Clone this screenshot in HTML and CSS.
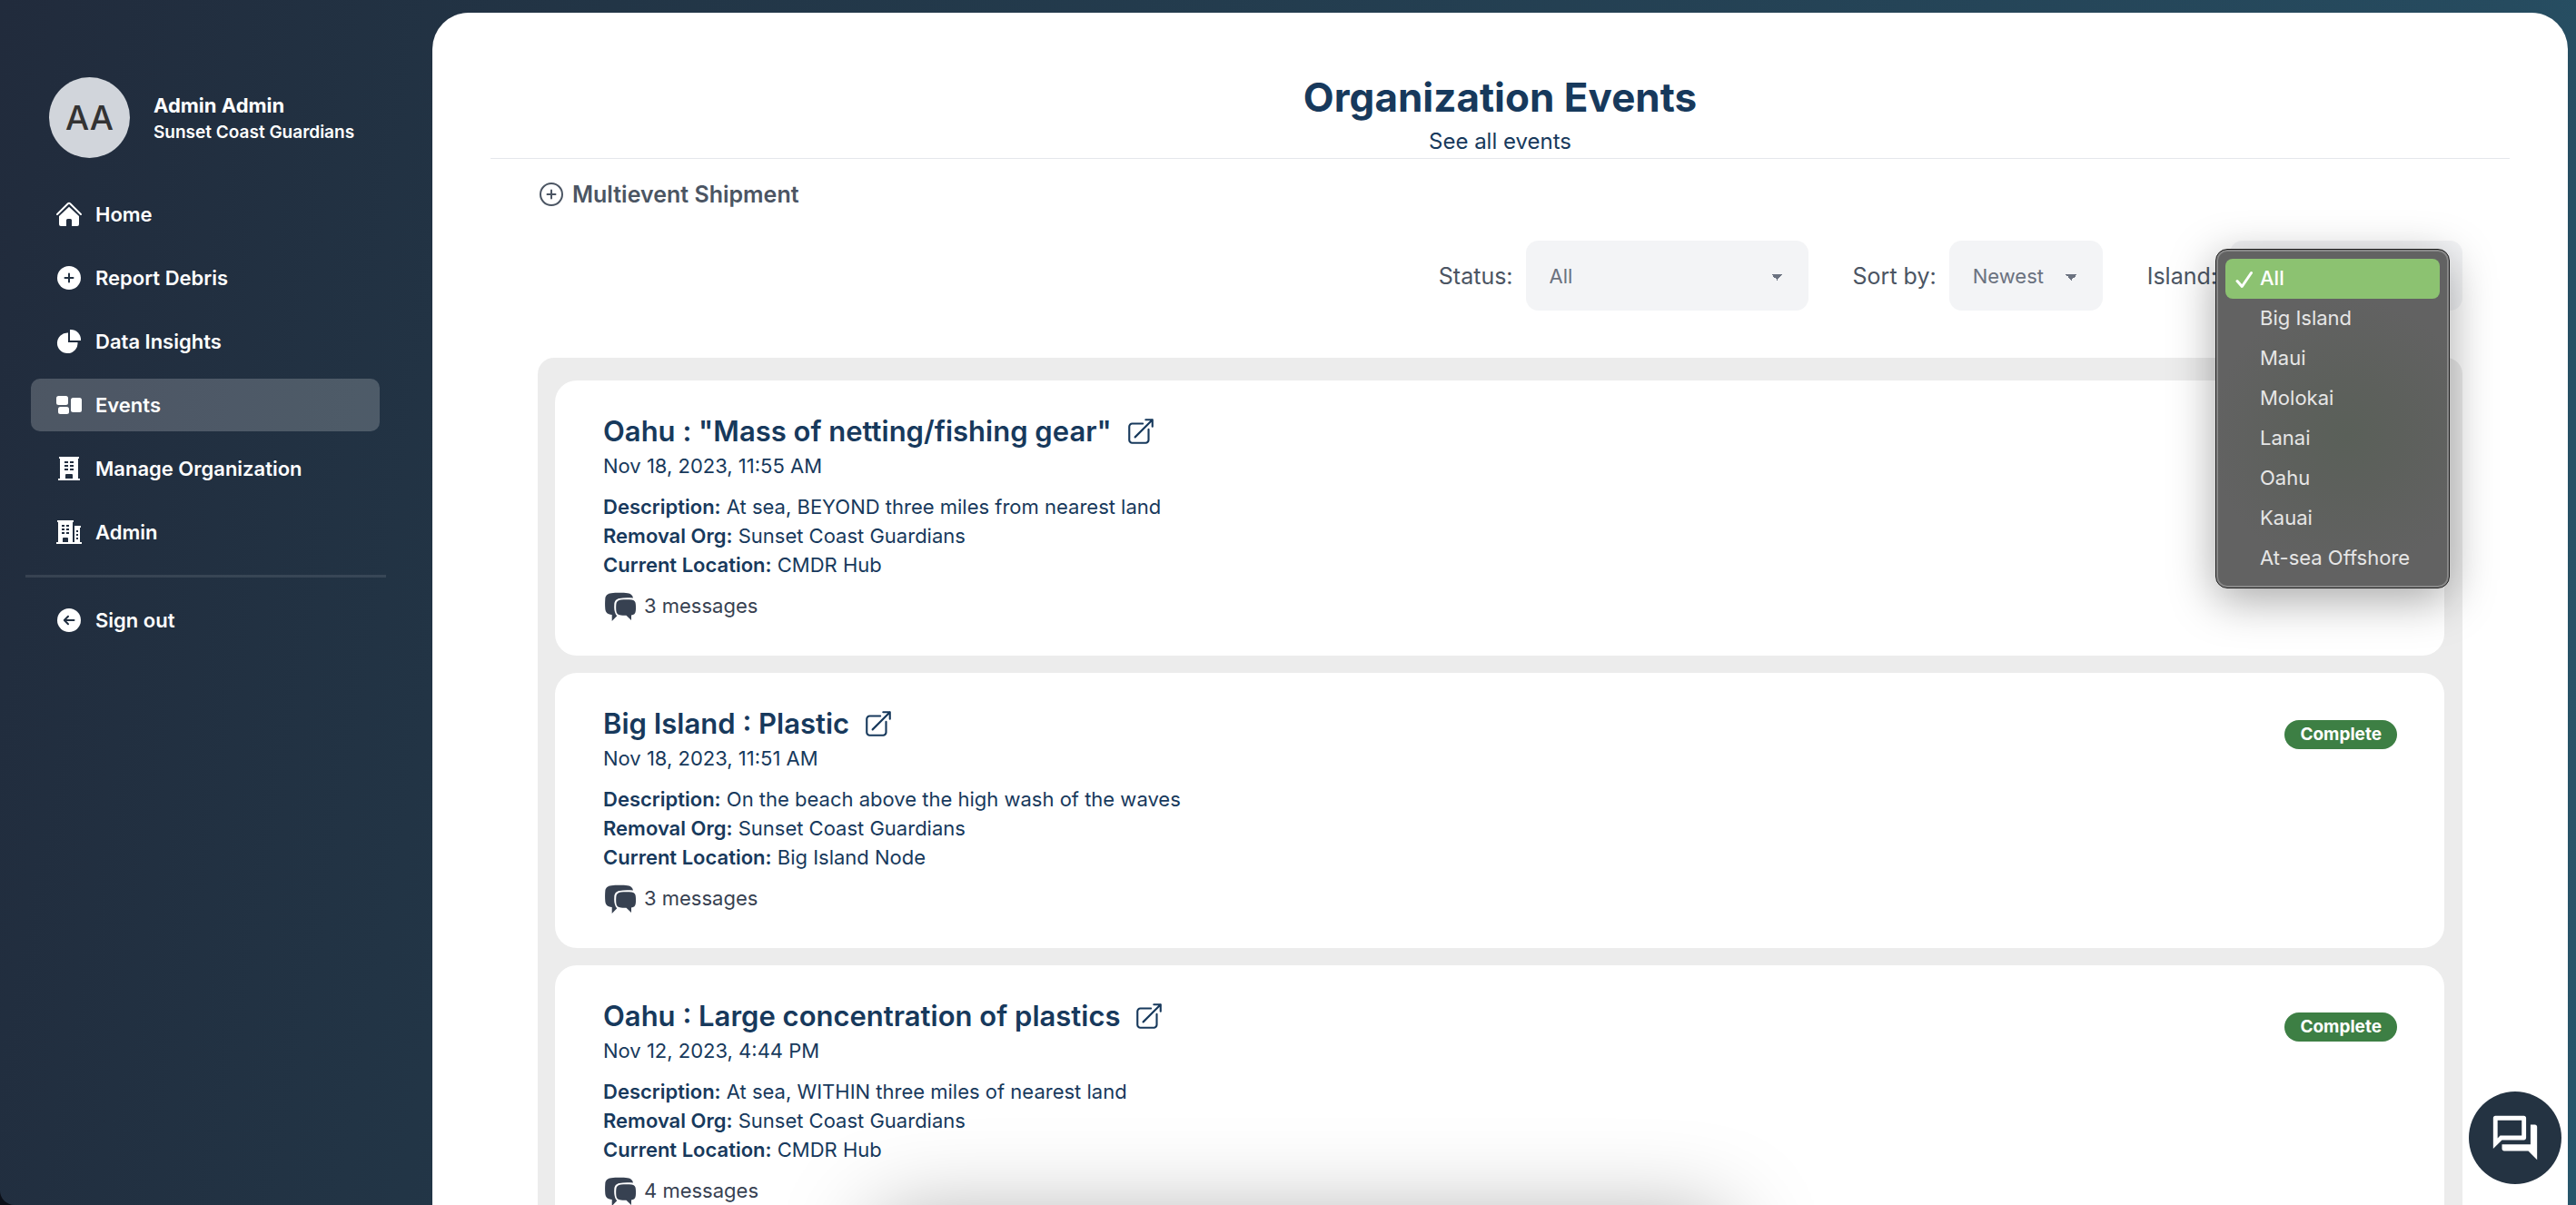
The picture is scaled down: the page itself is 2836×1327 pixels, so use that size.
FILE: index.html
```html
<!DOCTYPE html>
<html lang="en">
<head>
<meta charset="utf-8">
<meta name="viewport" content="width=device-width, initial-scale=1">
<title>Organization Events</title>
<link rel="stylesheet" href="styles.css">
</head>
<body>
<svg class="sprite" aria-hidden="true">
  <symbol id="open" viewBox="0 0 24 24"><path d="M13.5 6H5.25A2.25 2.25 0 0 0 3 8.25v10.5A2.25 2.25 0 0 0 5.25 21h10.5A2.25 2.25 0 0 0 18 18.75V10.5m-10.5 6L21 3m0 0h-5.25M21 3v5.25" fill="none" stroke="currentColor" stroke-width="1.5" stroke-linecap="round" stroke-linejoin="round"/></symbol>
  <symbol id="bubbles" viewBox="0 0 34 32">
    <path d="M7 1.300C12 .7 20 .7 25 1.300C28.500 1.800 30.500 3.500 31 6.500C25 6.200 20 6.200 16 6.900C12 7.700 10.500 10 10.300 13.500C10 18 10.300 21 12 24.800L13.300 26.300L7.700 32V24.900C2.500 24.500 .6 22.300 .3 18.500C0 14.500 0 11 .3 7.500C.6 3.700 3 1.700 7 1.300Z"/>
    <path d="M17.500 8.500C21 8 26 8 29.500 8.500C32.300 8.900 33.600 10.500 33.800 13C34.100 16 34.100 18.500 33.800 21C33.500 23.800 32 25.200 29 25.500V31L23.500 25.800C21 25.900 19.500 25.800 17.500 25.600C14.300 25.200 12.700 23.700 12.400 21C12.100 18.500 12.100 15.500 12.400 13C12.700 10.300 14.500 8.900 17.500 8.500Z"/>
  </symbol>
</svg>

<div class="app">
  <aside class="sidebar">
    <div class="profile">
      <div class="avatar">AA</div>
      <div>
        <p class="profile-name">Admin Admin</p>
        <p class="profile-org">Sunset Coast Guardians</p>
      </div>
    </div>
    <nav class="nav" aria-label="Main">
      <a class="nav-item" href="#home"><svg class="nav-icon" viewBox="0 0 28 28"><path d="M1 14L12.800 2.300Q14 1.300 15.200 2.300L27 14" fill="none" stroke="currentColor" stroke-width="2" stroke-linecap="round"/><path d="M14 5.700L25 16V25a2 2 0 0 1-2 2H17V20.500a1.500 1.500 0 0 0-1.500-1.500h-3A1.500 1.500 0 0 0 11 20.500V27H5a2 2 0 0 1-2-2V16z"/></svg>Home</a>
      <a class="nav-item" href="#report"><svg class="nav-icon" viewBox="0 0 28 28"><circle cx="14" cy="14" r="13"/><path class="cut" d="M9.500 14h9M14 9.500v9"/></svg>Report Debris</a>
      <a class="nav-item" href="#insights"><svg class="nav-icon" viewBox="0 0 28 28"><path d="M13 4.500V15h10.500A11.300 11.300 0 1 1 13 4.500z"/><path d="M16 1a11 11 0 0 1 11 11v1H15V1z"/></svg>Data Insights</a>
      <a class="nav-item active" href="#events" aria-current="page"><svg class="nav-icon" viewBox="0 0 28 28"><rect y="4" width="13" height="10" rx="2.500"/><rect x="2" y="16" width="12" height="8" rx="2.500"/><rect x="16" y="6" width="12" height="16" rx="2.500"/></svg>Events</a>
      <a class="nav-item" href="#organization"><svg class="nav-icon" viewBox="0 0 28 28"><path fill-rule="evenodd" d="M3 1H25V3H24V25H26V27H2V25H4V3H3zM9 6v2h4V6zM15 6v2h4V6zM9 10v2h4v-2zM15 10v2h4v-2zM9 14v2h4v-2zM15 14v2h4v-2zM11 20a1 1 0 0 0-1 1V25h8V21a1 1 0 0 0-1-1z"/></svg>Manage Organization</a>
      <a class="nav-item" href="#admin"><svg class="nav-icon" viewBox="0 0 28 28"><path fill-rule="evenodd" d="M1 1H19V3H18V25H20V7H27V9H26V25H28V27H0V25H2V3H1zM6 6v2h3V6zM11 6v2h3V6zM6 10v2h3v-2zM11 10v2h3v-2zM6 14v2h3v-2zM11 14v2h3v-2zM8 20a1 1 0 0 0-1 1V25h6V21a1 1 0 0 0-1-1zM22 12v2h2v-2zM22 16v2h2v-2zM22 20v2h2v-2z"/></svg>Admin</a>
      <hr class="nav-rule">
      <a class="nav-item" href="#signout"><svg class="nav-icon" viewBox="0 0 28 28"><circle cx="14" cy="14" r="13"/><path class="cut" d="M19.500 14H9M13 9.800L8.800 14L13 18.200"/></svg>Sign out</a>
    </nav>
  </aside>

  <main class="panel">
    <header class="page-head">
      <h1>Organization Events</h1>
      <p>See all events</p>
    </header>
    <section class="content">
      <button class="shipment" type="button"><svg class="shipment-icon" viewBox="0 0 26 26"><circle cx="13" cy="13" r="12"/><path d="M8.500 13h9M13 8.500v9"/></svg>Multievent Shipment</button>
      <form class="filters">
        <div class="field">
          <label for="status">Status:</label>
          <select id="status" class="select select-wide"><option>All</option><option>Complete</option></select>
        </div>
        <div class="field">
          <label for="sort">Sort by:</label>
          <select id="sort" class="select"><option>Newest</option><option>Oldest</option></select>
        </div>
        <div class="field">
          <label for="island">Island:</label>
          <div class="island">
            <select id="island" class="select select-island"><option>All</option></select>
            <ul class="menu" role="listbox" aria-label="Island">
              <li role="option" aria-selected="true"><svg class="check" viewBox="0 0 20 20"><path d="M2 11.500L7.300 17.500L17.500 2.500"/></svg>All</li>
              <li role="option">Big Island</li>
              <li role="option">Maui</li>
              <li role="option">Molokai</li>
              <li role="option">Lanai</li>
              <li role="option">Oahu</li>
              <li role="option">Kauai</li>
              <li role="option">At-sea Offshore</li>
            </ul>
          </div>
        </div>
      </form>

      <div class="events">
        <article class="card">
          <div>
            <h2>Oahu : "Mass of netting/fishing gear" <a href="#event-1" aria-label="Open event"><svg><use href="#open"/></svg></a></h2>
            <p class="date">Nov 18, 2023, 11:55 AM</p>
            <p><b>Description:</b> At sea, BEYOND three miles from nearest land</p>
            <p><b>Removal Org:</b> Sunset Coast Guardians</p>
            <p><b>Current Location:</b> CMDR Hub</p>
            <p class="messages"><svg><use href="#bubbles"/></svg>3 messages</p>
          </div>
        </article>
        <article class="card">
          <div>
            <h2>Big Island : Plastic <a href="#event-2" aria-label="Open event"><svg><use href="#open"/></svg></a></h2>
            <p class="date">Nov 18, 2023, 11:51 AM</p>
            <p><b>Description:</b> On the beach above the high wash of the waves</p>
            <p><b>Removal Org:</b> Sunset Coast Guardians</p>
            <p><b>Current Location:</b> Big Island Node</p>
            <p class="messages"><svg><use href="#bubbles"/></svg>3 messages</p>
          </div>
          <span class="badge">Complete</span>
        </article>
        <article class="card">
          <div>
            <h2>Oahu : Large concentration of plastics <a href="#event-3" aria-label="Open event"><svg><use href="#open"/></svg></a></h2>
            <p class="date">Nov 12, 2023, 4:44 PM</p>
            <p><b>Description:</b> At sea, WITHIN three miles of nearest land</p>
            <p><b>Removal Org:</b> Sunset Coast Guardians</p>
            <p><b>Current Location:</b> CMDR Hub</p>
            <p class="messages"><svg><use href="#bubbles"/></svg>4 messages</p>
          </div>
          <span class="badge">Complete</span>
        </article>
      </div>
    </section>
  </main>
</div>

<div class="sheet-shadow"></div>
<button class="chat" type="button" aria-label="Chat"><svg viewBox="0 0 24 24"><path d="M15 4v7H5.170L4 12.170V4h11m1-2H3c-.55 0-1 .45-1 1v14l4-4h10c.55 0 1-.45 1-1V3c0-.55-.45-1-1-1m5 4h-2v9H6v2c0 .55.45 1 1 1h11l4 4V7c0-.55-.45-1-1-1"/></svg></button>
</body>
</html>
```

FILE: styles.css
```css
* { box-sizing: border-box; }
html { background: #0b0f18; }
body {
  margin: 0;
  font-family: Inter, "Liberation Sans", sans-serif;
  font-size: 22px;
  line-height: 32px;
  color: #17395c;
}
h1, h2, p, ul { margin: 0; padding: 0; }
a { color: inherit; text-decoration: none; }
svg { display: block; fill: currentColor; }
.sprite { position: absolute; width: 0; height: 0; }

.app {
  display: flex;
  height: 100vh;
  overflow: hidden;
  border-bottom-left-radius: 16px;
  background: linear-gradient(100deg, #212b3c 0%, #223546 22%, #264b5f 90%, #28566b 100%);
}

/* Sidebar */
.sidebar { flex: none; width: 476px; padding: 85px 51px 0 34px; color: #fff; }
.profile { display: flex; align-items: center; gap: 26px; padding-left: 20px; margin-bottom: 33px; }
.avatar {
  display: grid;
  place-items: center;
  width: 89px;
  height: 89px;
  border-radius: 50%;
  background: #d1d5db;
  color: #333;
  font-size: 37px;
  font-weight: 500;
}
.profile-name { font-weight: 700; line-height: 32px; }
.profile-org { font-size: 19px; font-weight: 600; line-height: 28px; white-space: nowrap; }
.nav { display: flex; flex-direction: column; gap: 12px; }
.nav-item {
  display: flex;
  align-items: center;
  gap: 15px;
  height: 58px;
  margin-right: 7px;
  padding-left: 28px;
  border-radius: 10px;
  font-weight: 600;
}
.nav-item.active { background: rgba(255, 255, 255, .2); }
.nav-icon { width: 28px; height: 28px; }
.cut { fill: none; stroke: #212f41; stroke-width: 2; stroke-linecap: round; stroke-linejoin: round; }
.nav-rule { width: calc(100% + 6px); height: 3px; margin: 6px 0 6px -6px; border: 0; background: rgba(255, 255, 255, .1); }

/* Main panel */
.panel {
  flex: 1;
  margin: 14px 9px 0 0;
  padding: 64px 64px 0;
  overflow: hidden;
  border-radius: 40px 40px 0 0;
  background: #fff;
}
.page-head { text-align: center; border-bottom: 1px solid #e5e7eb; }
.page-head h1 { font-size: 44px; line-height: 58px; font-weight: 700; }
.page-head p { padding-top: 2px; font-size: 24px; line-height: 36px; }
.content { padding: 20px 52px 0; }
.shipment {
  display: flex;
  align-items: center;
  gap: 10px;
  padding: 0 2px;
  border: 0;
  background: none;
  color: #4b5563;
  font: 600 25px/38px Inter, "Liberation Sans", sans-serif;
}
.shipment-icon { width: 26px; height: 26px; fill: none; stroke: currentColor; stroke-width: 2; stroke-linecap: round; }

.filters { display: flex; justify-content: flex-end; gap: 49px; margin: 32px 0 52px; }
.field { display: flex; align-items: center; gap: 14px; color: #4b5563; font-size: 25px; }
.select {
  appearance: none;
  width: 169px;
  height: 77px;
  padding: 0 26px;
  border: 0;
  border-radius: 14px;
  color: #6b7280;
  font: 22px/32px Inter, "Liberation Sans", sans-serif;
  background-color: #f3f4f6;
  background-image: linear-gradient(45deg, transparent 50%, currentColor 50%), linear-gradient(135deg, currentColor 50%, transparent 50%);
  background-position: right 34px top 37px, right 28px top 37px;
  background-size: 7px 7px;
  background-repeat: no-repeat;
}
.select-wide { width: 311px; }
.select-island { display: block; width: 256px; }
.island { position: relative; }
.menu {
  position: absolute;
  z-index: 2;
  top: 9px;
  left: -16px;
  width: 258px;
  padding: 8px;
  list-style: none;
  border: 1px solid #1c1c1c;
  border-radius: 13px;
  background: radial-gradient(circle at 56% 55%, #5a6059 0%, #5d605c 25%, #626262 60%);
  box-shadow: inset 0 0 0 2px #888, 0 12px 50px rgba(0, 0, 0, .35);
  color: #e6e6e6;
  font-size: 22px;
}
.menu li { display: flex; align-items: center; height: 44px; margin: 0 2px; padding: 0 0 2px 38px; border-radius: 8px; white-space: nowrap; }
.menu li:first-child { margin-top: 2px; }
.menu li:last-child { margin-bottom: 2px; }
.menu li[aria-selected] { gap: 7px; padding-left: 11px; background: #8cc271; color: #fff; font-weight: 500; }
.check { width: 20px; height: 20px; margin-top: 3px; fill: none; stroke: currentColor; stroke-width: 3; stroke-linecap: round; stroke-linejoin: round; }

/* Event cards */
.events { display: flex; flex-direction: column; gap: 19px; padding: 25px 20px 25px 19px; border-radius: 18px; background: #ececec; }
.card { display: flex; justify-content: space-between; align-items: flex-start; padding: 35px 52px 38px 53px; border-radius: 24px; background: #fff; }
.card h2 { display: flex; align-items: center; gap: 15px; font-size: 31px; line-height: 42px; font-weight: 600; }
.card h2 svg { width: 34px; height: 34px; }
.date { margin-bottom: 12px; line-height: 34px; }
.card b { font-weight: 600; }
.messages { display: flex; align-items: center; gap: 9px; margin-top: 11px; padding-left: 2px; line-height: 34px; color: #374151; }
.messages svg { width: 34px; height: 32px; margin-top: 3px; }
.badge {
  margin-top: 17px;
  padding: 0 17px;
  border-radius: 16px;
  background: #3d7f44;
  color: #fff;
  font-size: 19px;
  font-weight: 700;
}

/* Overlays */
.sheet-shadow {
  position: fixed;
  left: 34%;
  right: 33%;
  bottom: -215px;
  height: 200px;
  border-radius: 20px;
  box-shadow: 0 0 100px rgba(0, 0, 0, .34);
}
.chat {
  position: fixed;
  right: 16px;
  bottom: 23px;
  display: grid;
  place-items: center;
  width: 102px;
  height: 102px;
  padding: 0;
  border: 0;
  border-radius: 50%;
  background: #243342;
  color: #fff;
}
.chat svg { width: 58px; height: 58px; }
```
